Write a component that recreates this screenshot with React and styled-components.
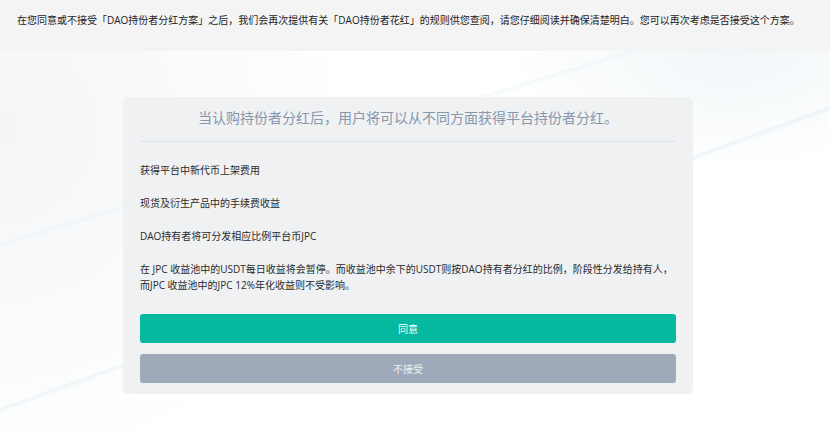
import React from "react";
import styled, { createGlobalStyle } from "styled-components";

const Global = createGlobalStyle`
  html, body { margin: 0; padding: 0; background: #ffffff; }
  body { font-family: "Open Sans", "Noto Sans CJK SC", sans-serif; }
`;

const Page = styled.div`
  width: 830px;
  min-height: 432px;
  background: #ffffff;
`;

const Banner = styled.div`
  height: 51px;
  box-sizing: border-box;
  padding: 13px 0 0 17px;
  background: #f4f4f5;
  font-size: 10px;
  line-height: 14px;
  color: #222;
  white-space: nowrap;
`;

const Stage = styled.div`
  position: relative;
  padding: 46px 14px 40px 0;
  background:
    radial-gradient(circle at 0% 20%, rgba(236,239,242,0.6), rgba(255,255,255,0) 40%),
    linear-gradient(160deg, rgba(255,255,255,0) 52%, rgba(214,236,246,0.45) 52.3%, rgba(255,255,255,0) 53%),
    linear-gradient(163deg, rgba(255,255,255,0) 30%, rgba(220,236,242,0.35) 30.3%, rgba(255,255,255,0) 31%),
    radial-gradient(ellipse at 88% 0%, rgba(228,238,242,0.5), rgba(255,255,255,0) 22%),
    #ffffff;
`;

const Card = styled.div`
  width: 570px;
  margin: 0 auto;
  box-sizing: border-box;
  padding: 0 17px 11px;
  background: #eff1f3;
  border-radius: 5px;
`;

const Title = styled.div`
  padding: 9px 0 11px;
  line-height: 24px;
  font-size: 14px;
  color: #8697ab;
  text-align: center;
  border-bottom: 1px solid #dbe2ea;
`;

const List = styled.div`
  display: flex;
  flex-direction: column;
  gap: 17px;
  padding-top: 20px;
`;

const Item = styled.p`
  margin: 0;
  font-size: 10px;
  line-height: 16px;
  color: #2a2a2a;
`;

const Actions = styled.div`
  display: flex;
  flex-direction: column;
  gap: 11px;
  margin-top: 21px;
`;

const Button = styled.button`
  height: 29px;
  border: none;
  border-radius: 3px;
  font-family: inherit;
  font-size: 10px;
  color: ${(p) => (p.$secondary ? "#eef1f4" : "#ffffff")};
  background: ${(p) => (p.$secondary ? "#9eaab9" : "#05b9a0")};
  cursor: pointer;
`;

export default function App() {
  return (
    <Page>
      <Global />
      <Banner>
        在您同意或不接受「DAO持份者分红方案」之后，我们会再次提供有关「DAO持份者花红」的规则供您查阅，请您仔细阅读并确保清楚明白。您可以再次考虑是否接受这个方案。
      </Banner>
      <Stage>
        <Card>
          <Title>当认购持份者分红后，用户将可以从不同方面获得平台持份者分红。</Title>
          <List>
            <Item>获得平台中新代币上架费用</Item>
            <Item>现货及衍生产品中的手续费收益</Item>
            <Item>DAO持有者将可分发相应比例平台币JPC</Item>
            <Item>
              在 JPC 收益池中的USDT每日收益将会暂停。而收益池中余下的USDT则按DAO持有者分红的比例，阶段性分发给持有人，
              <br />
              而JPC 收益池中的JPC 12%年化收益则不受影响。
            </Item>
          </List>
          <Actions>
            <Button>同意</Button>
            <Button $secondary>不接受</Button>
          </Actions>
        </Card>
      </Stage>
    </Page>
  );
}
